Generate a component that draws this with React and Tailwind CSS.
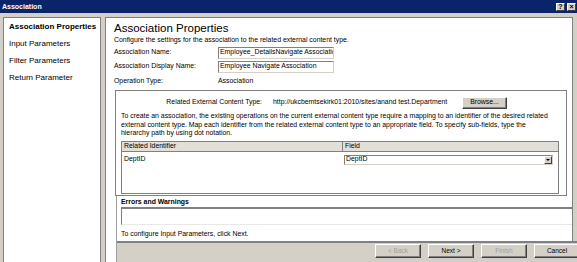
function CapBtn({ children }) {
  return (
    <div className="w-[9px] h-[8px] bg-[#d4d0c8] border border-t-white border-l-white border-r-[#404040] border-b-[#404040] flex items-center justify-center text-[7px] leading-none font-bold text-black">
      {children}
    </div>
  );
}

function Btn({ children, disabled }) {
  return (
    <div
      className={
        "w-[46px] h-[14px] shrink-0 bg-[#d4d0c8] border border-t-white border-l-white border-r-[#404040] border-b-[#404040] shadow-[inset_-1px_-1px_0_#808080] flex items-center justify-center text-[6.5px] leading-none " +
        (disabled ? "text-[#a0a0a0]" : "text-black")
      }
    >
      {children}
    </div>
  );
}

export default function App() {
  return (
    <div className="w-[577px] h-[262px] overflow-hidden bg-[#d4d0c8] font-['Liberation_Sans',Arial,sans-serif] text-black">
      {/* title bar */}
      <div className="h-[13px] bg-[#0a246a] flex items-center pl-[2px] pr-[1px]">
        <span className="text-white font-bold text-[7px] leading-none">Association</span>
        <div className="ml-auto flex gap-[2px]">
          <CapBtn>?</CapBtn>
          <CapBtn>×</CapBtn>
        </div>
      </div>

      <div className="flex pt-[4px] pl-[3px]">
        {/* left nav */}
        <div className="w-[98px] h-[250px] bg-white border border-[#808080] pl-[5px] flex flex-col text-[8px]">
          <div className="h-[17px] flex items-center font-bold">Association Properties</div>
          <div className="h-[17px] flex items-center">Input Parameters</div>
          <div className="h-[17px] flex items-center">Filter Parameters</div>
          <div className="h-[17px] flex items-center">Return Parameter</div>
        </div>

        {/* main panel */}
        <div className="ml-[4px] w-[468px] h-[250px] bg-white border border-[#808080] pl-[8px] flex flex-col text-[6.9px]">
          <div className="mt-[4px] h-[13px] leading-[13px] text-[11.5px]">Association Properties</div>
          <div className="h-[9px] leading-[9px] whitespace-nowrap">
            Configure the settings for the association to the related external content type.
          </div>
          <div className="mt-[2px] h-[13px] flex items-center">
            <div className="w-[104px]">Association Name:</div>
            <div className="w-[116px] h-[12px] border border-t-[#808080] border-l-[#808080] border-r-[#d4d0c8] border-b-[#d4d0c8] flex items-center pl-[1px] overflow-hidden whitespace-nowrap">
              Employee_DetailsNavigate Association
            </div>
          </div>
          <div className="mt-[1px] h-[13px] flex items-center">
            <div className="w-[104px]">Association Display Name:</div>
            <div className="w-[116px] h-[12px] border border-t-[#808080] border-l-[#808080] border-r-[#d4d0c8] border-b-[#d4d0c8] flex items-center pl-[1px] overflow-hidden whitespace-nowrap">
              Employee Navigate Association
            </div>
          </div>
          <div className="mt-[2px] h-[12px] flex items-center">
            <div className="w-[104px]">Operation Type:</div>
            <div>Association</div>
          </div>

          {/* related type box */}
          <div className="mt-[3px] ml-[1px] w-[452px] h-[106px] border border-[#808080] flex flex-col">
            <div className="mt-[5px] h-[13px] flex items-center">
              <div className="w-[146px] text-right whitespace-nowrap">Related External Content Type:</div>
              <div className="w-[200px] pl-[11px] whitespace-nowrap">
                http://ukcbemtsekirk01:2010/sites/anand test.Department
              </div>
              <div className="w-[45px] h-[12px] bg-[#d4d0c8] border border-t-white border-l-white border-r-[#404040] border-b-[#404040] shadow-[inset_-1px_-1px_0_#808080] flex items-center justify-center">
                Browse...
              </div>
            </div>
            <div className="mt-[3px] pl-[5px] leading-[8.5px] whitespace-nowrap">
              To create an association, the existing operations on the current external content type require a mapping to an identifier of the desired related
              <br />
              external content type. Map each identifier from the related external content type to an appropriate field. To specify sub-fields, type the
              <br />
              hierarchy path by using dot notation.
            </div>
            <div className="mt-[3.5px] ml-[5px] w-[438px] h-[53px] border border-[#808080] flex flex-col">
              <div className="h-[10px] bg-[#e2dfd8] border-b border-[#808080] flex">
                <div className="w-[221px] border-r border-[#808080] pl-[2px] flex items-center">Related Identifier</div>
                <div className="pl-[2px] flex items-center">Field</div>
              </div>
              <div className="mt-[2px] h-[11px] flex items-center">
                <div className="w-[222px] pl-[2px]">DeptID</div>
                <div className="w-[209px] h-[10px] border border-t-[#808080] border-l-[#808080] border-r-[#d4d0c8] border-b-[#d4d0c8] flex items-center pl-[1px]">
                  <span>DeptID</span>
                  <div className="ml-auto w-[8px] h-[8px] bg-[#d4d0c8] border border-t-white border-l-white border-r-[#404040] border-b-[#404040] flex items-center justify-center">
                    <div className="w-0 h-0 border-l-[2px] border-r-[2px] border-t-[2px] border-l-transparent border-r-transparent border-t-black" />
                  </div>
                </div>
              </div>
            </div>
          </div>

          {/* lower section */}
          <div className="ml-[2px] border-l border-[#a0a0a0] pl-[4px] flex flex-col">
            <div className="mt-[1px] h-[10px] leading-[10px] font-bold">Errors and Warnings</div>
            <div className="h-[18px] border-t-2 border-l border-t-[#808080] border-l-[#808080] border-b border-b-[#e8e8e8] bg-white" />
            <div className="mt-[4px] h-[9px] leading-[9px]">To configure Input Parameters, click Next.</div>
            <div className="mt-[3px] -ml-[4px] -mr-[8px] h-[24px] bg-[#d4d0c8] border-t-2 border-[#808080] pt-[1px] pl-[258px] flex gap-[7px]">
              <Btn disabled>&lt; Back</Btn>
              <Btn>Next &gt;</Btn>
              <Btn disabled>Finish</Btn>
              <Btn>Cancel</Btn>
            </div>
          </div>
        </div>
      </div>
    </div>
  );
}
